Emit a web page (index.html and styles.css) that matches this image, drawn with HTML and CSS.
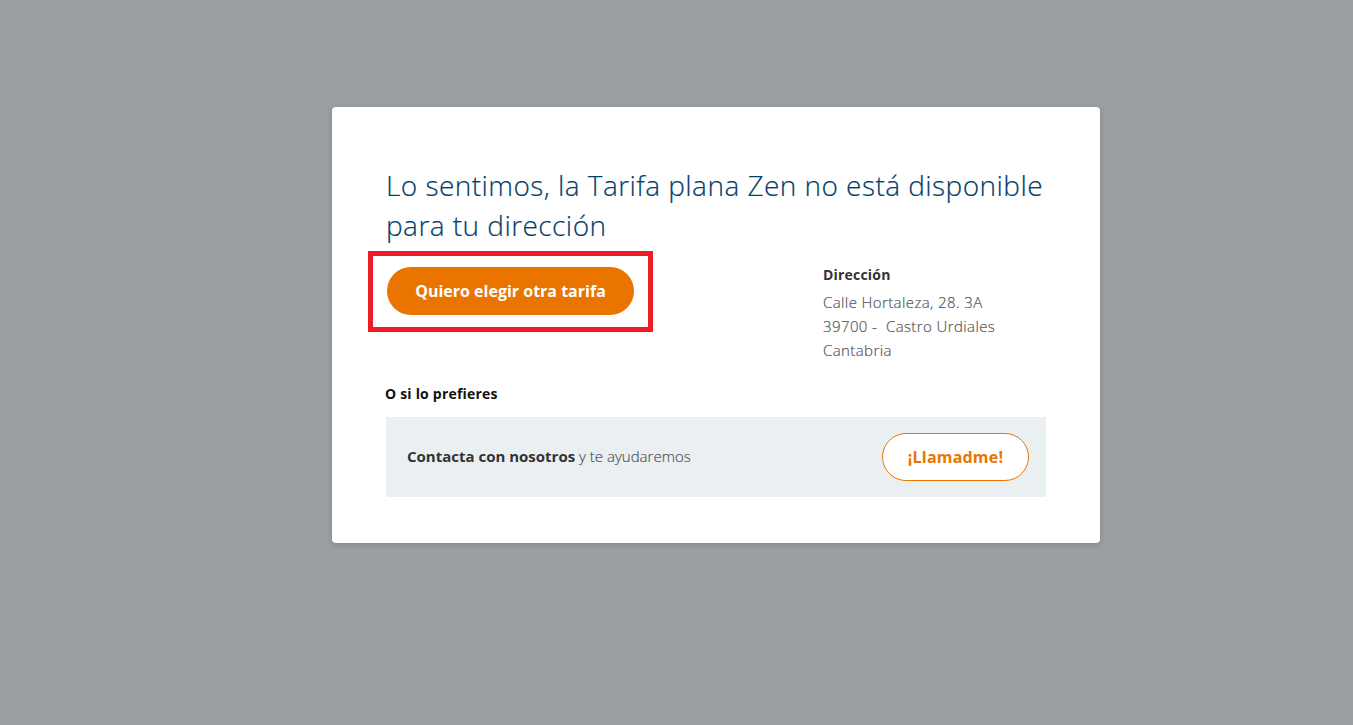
FILE: index.html
```html
<!DOCTYPE html>
<html lang="es">
<head>
<meta charset="utf-8">
<title>Tarifa no disponible</title>
<link rel="stylesheet" href="styles.css">
</head>
<body>
<div class="overlay">
  <div class="card">
    <h1 class="title">Lo sentimos, la Tarifa plana Zen no está disponible para tu dirección</h1>
    <div class="row">
      <div class="action">
        <button class="btn-primary">Quiero elegir otra tarifa</button>
      </div>
      <div class="address">
        <div class="address-label">Dirección</div>
        <div class="address-line">Calle Hortaleza, 28. 3A</div>
        <div class="address-line">39700 -&nbsp; Castro Urdiales</div>
        <div class="address-line">Cantabria</div>
      </div>
    </div>
    <div class="alt-label">O si lo prefieres</div>
    <div class="contact">
      <div class="contact-text"><strong>Contacta con nosotros</strong> y te ayudaremos</div>
      <button class="btn-outline">¡Llamadme!</button>
    </div>
  </div>
</div>
</body>
</html>
```
FILE: styles.css
```css
* { box-sizing: border-box; }
html, body { margin: 0; padding: 0; height: 100%; }
body {
  background: #9b9fa2;
  font-family: "Open Sans", "Noto Sans", sans-serif;
}
.overlay {
  padding-top: 107px;
  padding-left: 332px;
}
.card {
  width: 768px;
  background: #fff;
  border-radius: 4px;
  box-shadow: 0 2px 6px rgba(0,0,0,0.15);
  padding: 58px 54px 46px 54px;
}
.title {
  margin: 0;
  font-size: 28px;
  line-height: 40px;
  font-weight: 300;
  color: #053f6c;
  letter-spacing: 0.45px;
  -webkit-text-stroke: 0.2px #053f6c;
}
.row {
  display: flex;
  justify-content: space-between;
  margin-top: 20px;
}
.action { padding-top: 2px; }
.btn-primary {
  position: relative;
  height: 48px;
  width: 247px;
  margin-left: 1px;
  border: none;
  border-radius: 24px;
  background: #e97500;
  color: #fff;
  font-family: inherit;
  font-size: 16px;
  font-weight: 700;
  cursor: pointer;
}
.btn-primary::after {
  content: "";
  position: absolute;
  left: -19px;
  right: -19px;
  top: -16px;
  bottom: -17px;
  border: 5px solid #ee1c25;
}
.address {
  width: 223px;
  color: #555;
  font-size: 15px;
  font-weight: 300;
}
.address-label {
  font-size: 14px;
  font-weight: 700;
  color: #333;
  line-height: 20px;
  margin-bottom: 5px;
  letter-spacing: 0.2px;
}
.address-line {
  line-height: 24px;
  letter-spacing: 0.4px;
  -webkit-text-stroke: 0.2px #555;
}
.alt-label {
  margin-top: 22px;
  margin-left: -1px;
  font-size: 14px;
  font-weight: 700;
  line-height: 20px;
  color: #111;
  letter-spacing: 0.2px;
}
.contact {
  margin-top: 13px;
  background: #eaeff2;
  height: 80px;
  display: flex;
  align-items: center;
  justify-content: space-between;
  padding: 0 17px 0 21px;
}
.contact-text {
  font-size: 15px;
  color: #555;
  font-weight: 300;
  margin-top: -2px;
  -webkit-text-stroke: 0.2px #555;
}
.contact-text strong { color: #333; font-weight: 700; -webkit-text-stroke: 0; }
.btn-outline {
  height: 48px;
  width: 147px;
  border: 1px solid #e97500;
  border-radius: 24px;
  background: #fff;
  color: #e97500;
  font-family: inherit;
  font-size: 16px;
  font-weight: 700;
  letter-spacing: 0.2px;
  cursor: pointer;
}
```
